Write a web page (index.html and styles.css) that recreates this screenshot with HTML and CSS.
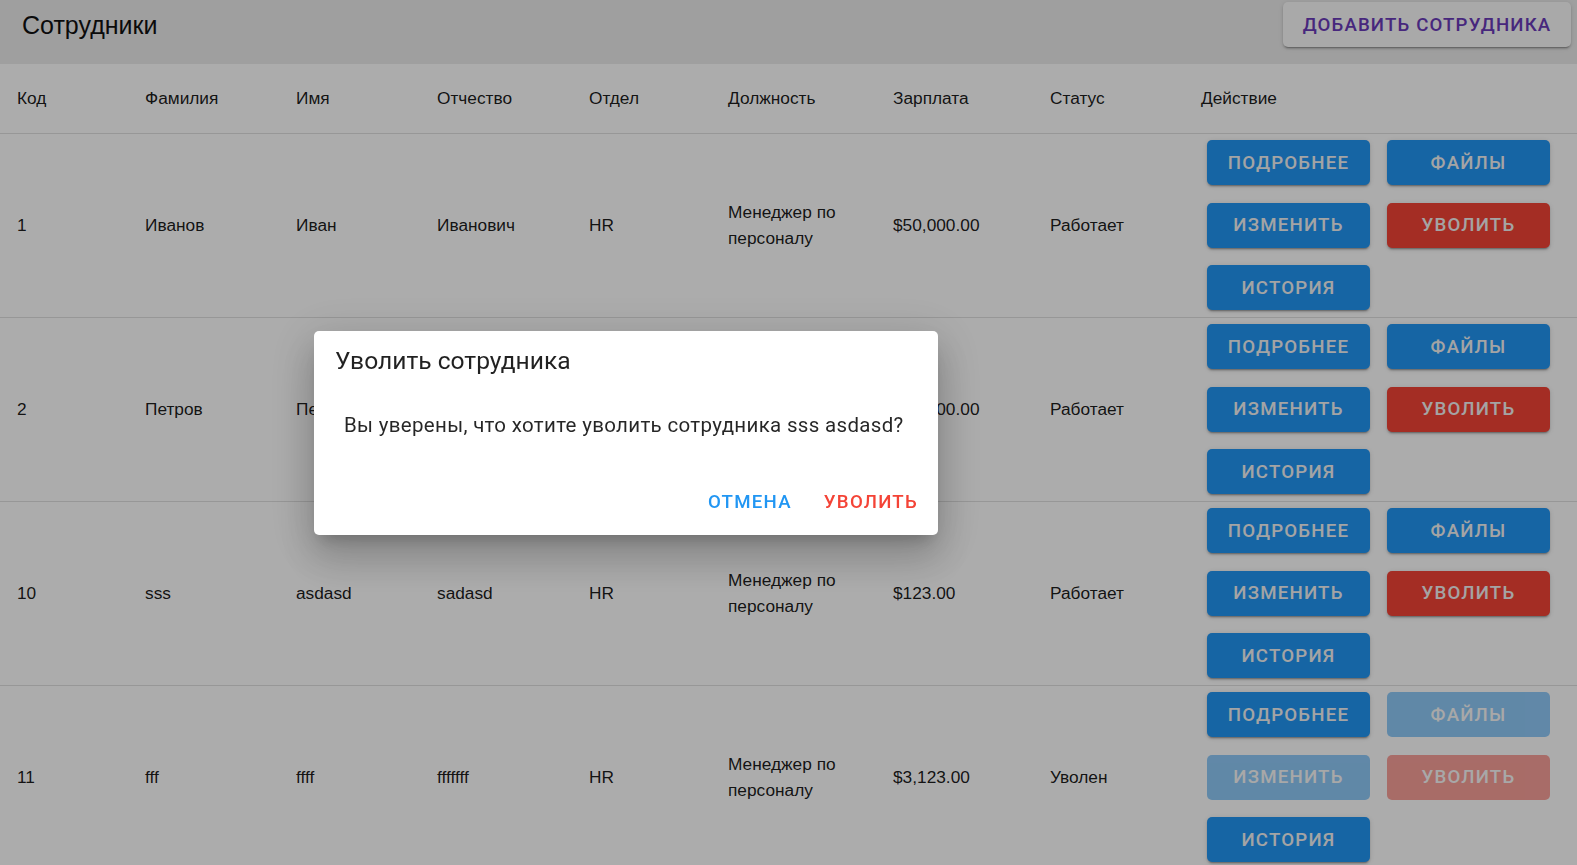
FILE: index.html
```html
<!DOCTYPE html>
<html lang="ru">
<head>
<meta charset="utf-8">
<title>Сотрудники</title>
<link rel="stylesheet" href="styles.css">
</head>
<body>
<div class="page">
  <header class="topbar">
    <h1 class="title">Сотрудники</h1>
    <button class="btn-add">Добавить сотрудника</button>
  </header>

  <table class="grid">
    <colgroup>
      <col class="c-id"><col class="c-last"><col class="c-first"><col class="c-mid"><col class="c-dep"><col class="c-pos"><col class="c-sal"><col class="c-st"><col class="c-act">
    </colgroup>
    <thead>
      <tr>
        <th>Код</th><th>Фамилия</th><th>Имя</th><th>Отчество</th><th>Отдел</th><th>Должность</th><th>Зарплата</th><th>Статус</th><th>Действие</th>
      </tr>
    </thead>
    <tbody>
      <tr>
        <td>1</td><td>Иванов</td><td>Иван</td><td>Иванович</td><td>HR</td><td>Менеджер по персоналу</td><td>$50,000.00</td><td>Работает</td>
        <td class="actions"><div class="btns">
          <button class="btn blue">Подробнее</button><button class="btn blue">Файлы</button>
          <button class="btn blue">Изменить</button><button class="btn red">Уволить</button>
          <button class="btn blue">История</button>
        </div></td>
      </tr>
      <tr>
        <td>2</td><td>Петров</td><td>Петр</td><td>Петрович</td><td>IT</td><td>Разработчик</td><td>$60,000.00</td><td>Работает</td>
        <td class="actions"><div class="btns">
          <button class="btn blue">Подробнее</button><button class="btn blue">Файлы</button>
          <button class="btn blue">Изменить</button><button class="btn red">Уволить</button>
          <button class="btn blue">История</button>
        </div></td>
      </tr>
      <tr>
        <td>10</td><td>sss</td><td>asdasd</td><td>sadasd</td><td>HR</td><td>Менеджер по персоналу</td><td>$123.00</td><td>Работает</td>
        <td class="actions"><div class="btns">
          <button class="btn blue">Подробнее</button><button class="btn blue">Файлы</button>
          <button class="btn blue">Изменить</button><button class="btn red">Уволить</button>
          <button class="btn blue">История</button>
        </div></td>
      </tr>
      <tr>
        <td>11</td><td>fff</td><td>ffff</td><td>fffffff</td><td>HR</td><td>Менеджер по персоналу</td><td>$3,123.00</td><td>Уволен</td>
        <td class="actions"><div class="btns">
          <button class="btn blue">Подробнее</button><button class="btn blue" disabled>Файлы</button>
          <button class="btn blue" disabled>Изменить</button><button class="btn red" disabled>Уволить</button>
          <button class="btn blue">История</button>
        </div></td>
      </tr>
    </tbody>
  </table>
</div>

<div class="backdrop">
  <div class="dialog" role="dialog">
    <h2 class="dlg-title">Уволить сотрудника</h2>
    <p class="dlg-text">Вы уверены, что хотите уволить сотрудника sss asdasd?</p>
    <div class="dlg-actions">
      <button class="tbtn cancel">Отмена</button>
      <button class="tbtn danger">Уволить</button>
    </div>
  </div>
</div>
</body>
</html>
```

FILE: styles.css
```css
* { box-sizing: border-box; }

html, body {
  margin: 0;
  padding: 0;
  background: #ffffff;
  overflow: hidden;
}

body {
  font-family: "Liberation Sans", Arial, sans-serif;
  color: rgba(0, 0, 0, 0.87);
  height: 865px;
}

.page {
  width: 1577px;
}

.topbar {
  height: 64px;
  background: #ececec;
  display: flex;
  justify-content: space-between;
  align-items: flex-start;
}

.title {
  margin: 0;
  padding: 9px 0 0 22px;
  font-size: 25px;
  line-height: 32px;
  font-weight: 400;
  color: #111;
}

.btn-add {
  margin: 2px 6px 0 0;
  width: 288px;
  height: 45px;
  border: 0;
  border-radius: 5px;
  background: #fbfbfb;
  color: #6a3ab9;
  font-family: Roboto, "Noto Sans", sans-serif;
  font-weight: 500;
  font-size: 18.67px;
  letter-spacing: 1.15px;
  text-transform: uppercase;
  box-shadow: 0 3px 1px -2px rgba(0,0,0,.2), 0 2px 2px 0 rgba(0,0,0,.14), 0 1px 5px 0 rgba(0,0,0,.12);
}

.grid {
  width: 1577px;
  border-collapse: collapse;
  table-layout: fixed;
  font-size: 17.3px;
}

.c-id { width: 128px; }
.c-last { width: 151px; }
.c-first { width: 141px; }
.c-mid { width: 152px; }
.c-dep { width: 139px; }
.c-pos { width: 165px; }
.c-sal { width: 157px; }
.c-st { width: 151px; }
.c-act { width: 393px; }

.grid th, .grid td {
  text-align: left;
  vertical-align: middle;
  padding: 0 16px 0 17px;
  border-bottom: 1px solid #e0e0e0;
  font-weight: 400;
  line-height: 26px;
  color: rgba(0, 0, 0, 0.9);
}

.grid thead th {
  height: 69px;
}

.grid td.actions {
  padding: 6.5px 0 6.5px 23px;
}

.btns {
  display: grid;
  grid-template-columns: 163px 163px;
  column-gap: 17px;
  row-gap: 17.5px;
}

.btn {
  height: 45px;
  border: 0;
  border-radius: 5px;
  color: #f4f4f4;
  font-family: Roboto, "Noto Sans", sans-serif;
  font-weight: 500;
  font-size: 18.67px;
  letter-spacing: 1.2px;
  text-transform: uppercase;
  padding: 0;
  box-shadow: 0 3px 1px -2px rgba(0,0,0,.2), 0 2px 2px 0 rgba(0,0,0,.14), 0 1px 5px 0 rgba(0,0,0,.12);
}

.btn.blue { background: #2196f3; }
.btn.red { background: #f44336; }

.btn:disabled {
  opacity: 0.5;
  box-shadow: none;
}

.backdrop {
  position: fixed;
  inset: 0;
  background: rgba(0, 0, 0, 0.325);
  display: flex;
  align-items: center;
}

.dialog {
  margin-left: 314px;
  width: 624px;
  height: 204px;
  background: #ffffff;
  border-radius: 5px;
  box-shadow: 0 11px 15px -7px rgba(0,0,0,.2), 0 24px 38px 3px rgba(0,0,0,.14), 0 9px 46px 8px rgba(0,0,0,.12);
  font-family: Roboto, "Noto Sans", sans-serif;
  display: flex;
  flex-direction: column;
}

.dlg-title {
  margin: 0;
  padding: 14px 21px 0 21px;
  font-size: 24.6px;
  line-height: 32px;
  font-weight: 400;
  color: rgba(0, 0, 0, 0.87);
}

.dlg-text {
  margin: 33px 0 0 0;
  padding: 0 30px;
  font-size: 20.5px;
  line-height: 30px;
  letter-spacing: 0.32px;
  color: rgba(0, 0, 0, 0.85);
}

.dlg-actions {
  margin-top: auto;
  padding: 0 9px 11px 0;
  display: flex;
  justify-content: flex-end;
  gap: 10px;
}

.tbtn {
  height: 44px;
  padding: 0 11px;
  border: 0;
  background: transparent;
  font-family: Roboto, "Noto Sans", sans-serif;
  font-weight: 500;
  font-size: 18.67px;
  letter-spacing: 1.25px;
  text-transform: uppercase;
}

.tbtn.cancel { color: #2196f3; }
.tbtn.danger { color: #f44336; }
```
